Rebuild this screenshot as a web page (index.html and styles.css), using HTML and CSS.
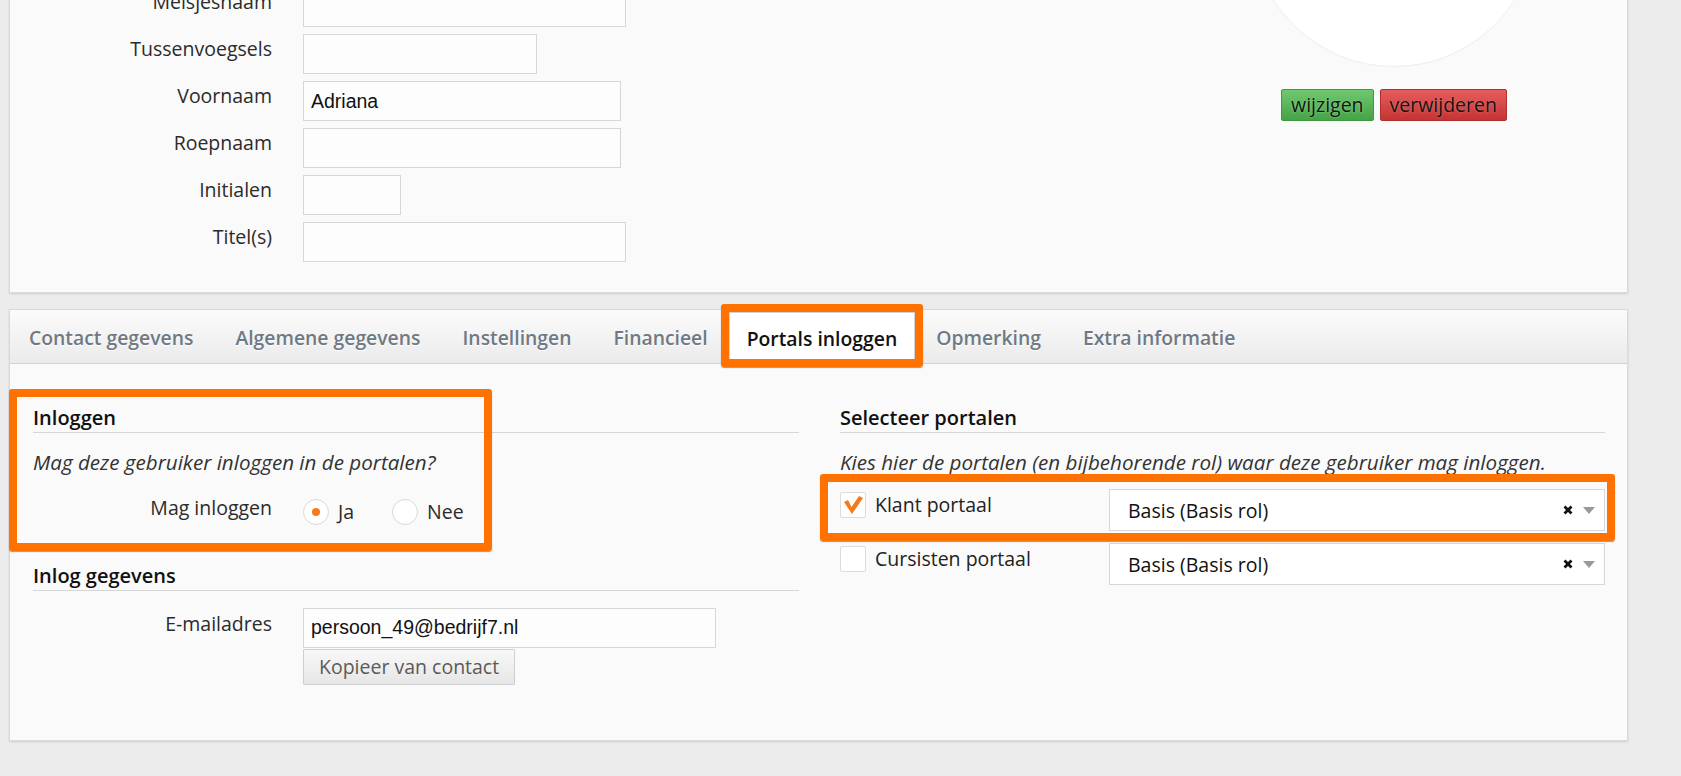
FILE: index.html
```html
<!DOCTYPE html>
<html lang="nl">
<head>
    <meta charset="UTF-8">
    <meta name="viewport" content="width=device-width, initial-scale=1.0">
    <title>Persoon bewerken</title>
    <link rel="stylesheet" href="styles.css">
</head>
<body>
    <div class="page">
        <!-- Persoonsgegevens met foto -->
        <div class="card card-person">
            <div class="person-form">
                <div class="form-row"><label>Aanhef</label><input class="field w-short" type="text" value=""></div>
                <div class="form-row"><label>Geslacht</label><input class="field w-short" type="text" value=""></div>
                <div class="form-row"><label>Relatienummer</label><input class="field w-mid" type="text" value=""></div>
                <div class="form-row"><label>Achternaam</label><input class="field w-long" type="text" value=""></div>
                <div class="form-row"><label>Geboortenaam</label><input class="field w-long" type="text" value=""></div>
                <div class="form-row"><label>Meisjesnaam</label><input class="field w-long" type="text" value=""></div>
                <div class="form-row"><label>Tussenvoegsels</label><input class="field w-mid" type="text" value=""></div>
                <div class="form-row"><label>Voornaam</label><input class="field w-name" type="text" value="Adriana"></div>
                <div class="form-row"><label>Roepnaam</label><input class="field w-name" type="text" value=""></div>
                <div class="form-row"><label>Initialen</label><input class="field w-short" type="text" value=""></div>
                <div class="form-row"><label>Titel(s)</label><input class="field w-long" type="text" value=""></div>
            </div>
            <div class="photo-col">
                <div class="avatar"></div>
                <div class="photo-actions">
                    <button class="btn btn-green">wijzigen</button>
                    <button class="btn btn-red">verwijderen</button>
                </div>
            </div>
        </div>

        <!-- Tabbladen -->
        <div class="card card-tabs">
            <div class="tabs">
                <div class="tab">Contact gegevens</div>
                <div class="tab">Algemene gegevens</div>
                <div class="tab">Instellingen</div>
                <div class="tab">Financieel</div>
                <div class="tab active">Portals inloggen<span class="mark mark-tab"></span></div>
                <div class="tab">Opmerking</div>
                <div class="tab">Extra informatie</div>
            </div>

            <div class="tab-body">
                <div class="col">
                    <div class="section login-section">
                        <h3>Inloggen</h3>
                        <p class="hint">Mag deze gebruiker inloggen in de portalen?</p>
                        <div class="form-row radio-row">
                            <label>Mag inloggen</label>
                            <div class="radio-group">
                                <span class="radio-opt"><span class="radio checked"><span class="dot"></span></span>Ja</span>
                                <span class="radio-opt"><span class="radio"></span>Nee</span>
                            </div>
                        </div>
                        <span class="mark mark-login"></span>
                    </div>

                    <div class="section credentials">
                        <h3>Inlog gegevens</h3>
                        <div class="form-row email-row">
                            <label>E-mailadres</label>
                            <div class="email-field">
                                <input class="field w-mail" type="text" value="persoon_49@bedrijf7.nl">
                                <button class="btn btn-plain">Kopieer van contact</button>
                            </div>
                        </div>
                    </div>
                </div>

                <div class="col">
                    <h3>Selecteer portalen</h3>
                    <p class="hint">Kies hier de portalen (en bijbehorende rol) waar deze gebruiker mag inloggen.</p>
                    <div class="portal-list">
                        <div class="portal-row">
                            <div class="portal-check">
                                <span class="checkbox">
                                    <svg width="20" height="18" viewBox="0 0 20 18"><path d="M1 6 L5 4 L8.5 11 L16 0 L20 2 L9 18 Z" fill="#f47a1d"/></svg>
                                </span>
                                Klant portaal
                            </div>
                            <div class="select">
                                <span class="select-value">Basis (Basis rol)</span>
                                <svg class="clear" width="10" height="10" viewBox="0 0 10 10"><path d="M1.5 1.5 L8.5 8.5 M8.5 1.5 L1.5 8.5" stroke="#111" stroke-width="2.8"/></svg>
                                <svg class="arrow" width="12" height="7" viewBox="0 0 12 7"><path d="M0 0 H12 L6 7 Z" fill="#9a9a9a"/></svg>
                            </div>
                            <span class="mark mark-portal"></span>
                        </div>
                        <div class="portal-row">
                            <div class="portal-check">
                                <span class="checkbox"></span>
                                Cursisten portaal
                            </div>
                            <div class="select">
                                <span class="select-value">Basis (Basis rol)</span>
                                <svg class="clear" width="10" height="10" viewBox="0 0 10 10"><path d="M1.5 1.5 L8.5 8.5 M8.5 1.5 L1.5 8.5" stroke="#111" stroke-width="2.8"/></svg>
                                <svg class="arrow" width="12" height="7" viewBox="0 0 12 7"><path d="M0 0 H12 L6 7 Z" fill="#9a9a9a"/></svg>
                            </div>
                        </div>
                    </div>
                </div>
            </div>
        </div>
    </div>
</body>
</html>
```

FILE: styles.css
```css
body {
    margin: 0;
    background-color: #ececec;
    font-family: "Open Sans", sans-serif;
    font-size: 19.5px;
    line-height: 26.5px;
    color: #2b2b2b;
    overflow: hidden;
}
.page {
    margin-top: -272px;
    padding: 0 0 40px 9px;
    width: 1619px;
}
.card {
    background-color: #fafafa;
    border: 1px solid #d9d9d9;
    box-shadow: 0 1px 2px rgba(0, 0, 0, 0.12);
}

/* bovenste kaart */
.card-person {
    display: flex;
    justify-content: space-between;
    padding: 23px 91px 30px 23px;
}
.form-row {
    display: flex;
    align-items: flex-start;
    gap: 31px;
    margin-bottom: 7px;
}
.person-form .form-row:last-child {
    margin-bottom: 0;
}
.form-row label {
    flex: none;
    width: 239px;
    padding-top: 2px;
    text-align: right;
}
.field {
    box-sizing: border-box;
    height: 40px;
    margin: 0;
    padding: 0 7px;
    border: 1px solid #d7d7d7;
    background-color: #fdfdfd;
    font-family: "Liberation Sans", Arial, sans-serif;
    font-size: 19.5px;
    color: #111;
    outline: none;
}
.w-long { width: 323px; }
.w-name { width: 318px; }
.w-mid { width: 234px; }
.w-short { width: 98px; }
.w-mail { width: 413px; display: block; }

.photo-col {
    display: flex;
    flex-direction: column;
    align-items: center;
    padding-top: 30px;
}
.avatar {
    width: 284px;
    height: 284px;
    border-radius: 50%;
    background-color: #fff;
    box-shadow: 0 1px 1px rgba(170, 205, 235, 0.25);
}
.photo-actions {
    display: flex;
    gap: 6px;
    margin-top: 23px;
}
.btn {
    height: 32px;
    padding: 0 9px;
    border-radius: 2px;
    font-family: "Open Sans", sans-serif;
    font-size: 19.5px;
    line-height: 28px;
    color: #111;
    cursor: pointer;
}
.btn-green {
    background: linear-gradient(#6fc86f, #47a347);
    border: 1px solid #3f9a3f;
    text-shadow: 0 0 2px rgba(160, 235, 160, 0.9);
}
.btn-red {
    background: linear-gradient(#e65d5d, #c53434);
    border: 1px solid #b02f2f;
    text-shadow: 0 0 2px rgba(250, 160, 160, 0.6);
}
.btn-plain {
    display: block;
    height: 36px;
    margin-top: 1px;
    padding: 0 15px;
    border: 1px solid #cfcfcf;
    border-radius: 1px;
    background: linear-gradient(#f8f8f8, #e6e6e6);
    color: #5a5a5a;
    line-height: 32px;
}

/* tabbladen */
.card-tabs {
    margin-top: 16px;
}
.tabs {
    display: flex;
    height: 53px;
    border-bottom: 1px solid #d2d2d2;
    background: linear-gradient(#fbfbfb, #ebebeb);
}
.tab {
    display: flex;
    align-items: center;
    padding: 4px 21px 0;
    font-size: 19.35px;
    font-weight: 600;
    color: #6f7984;
    text-shadow: 0 1px 0 #fff;
    white-space: nowrap;
}
.tab:first-child {
    padding-left: 19px;
}
.tab.active {
    position: relative;
    margin: 2px 0 -1px;
    padding: 2px 17px 0;
    background-color: #fff;
    border: 1px solid #d2d2d2;
    border-bottom: none;
    color: #111;
}

.tab-body {
    display: grid;
    grid-template-columns: 766px 765px;
    gap: 41px;
    padding: 40px 23px 48px;
}
h3 {
    margin: 0;
    padding-bottom: 1px;
    border-bottom: 1px solid #d6d6d6;
    font-size: 20px;
    font-weight: 600;
    line-height: 27px;
    color: #111;
}
.hint {
    margin: 15.5px 0 0;
    font-size: 20.6px;
    font-style: italic;
    color: #333;
}
.section {
    position: relative;
}
.radio-row {
    margin-top: 20px;
    margin-bottom: 0;
}
.radio-row label {
    padding-top: 0;
}
.radio-group {
    display: flex;
    padding-top: 4px;
}
.radio-opt {
    display: flex;
    align-items: center;
    gap: 9px;
    margin-right: 38px;
}
.radio {
    display: flex;
    align-items: center;
    justify-content: center;
    box-sizing: border-box;
    width: 26px;
    height: 26px;
    border: 1px solid #d9d9d9;
    border-radius: 50%;
    background-color: #fff;
}
.radio .dot {
    width: 8px;
    height: 8px;
    border-radius: 50%;
    background-color: #f47a1d;
}
.credentials {
    margin-top: 36px;
}
.email-row {
    margin-top: 17px;
}
.email-row label {
    padding-top: 3px;
}

/* portalen */
.portal-list {
    margin-top: 14px;
}
.portal-row {
    position: relative;
    display: flex;
    height: 42px;
    margin-bottom: 12px;
}
.portal-check {
    display: flex;
    align-items: flex-start;
    gap: 9px;
    flex: none;
    width: 269px;
    padding-top: 3px;
    color: #222;
}
.checkbox {
    display: flex;
    align-items: center;
    justify-content: center;
    box-sizing: border-box;
    width: 26px;
    height: 26px;
    border: 1px solid #dcdcdc;
    border-radius: 2px;
    background-color: #fff;
}
.select {
    display: flex;
    align-items: center;
    flex: 1;
    box-sizing: border-box;
    height: 42px;
    padding: 0 9px 0 18px;
    border: 1px solid #d7d7d7;
    background-color: #fff;
    color: #111;
}
.select-value {
    flex: 1;
    padding-top: 2px;
}
.select .clear {
    margin-right: 10px;
}

/* oranje markeringen */
.mark {
    position: absolute;
    border: 8px solid #ff7200;
    border-radius: 3px;
    box-shadow: 0 1px 1px rgba(0, 0, 0, 0.4);
    pointer-events: none;
}
.mark-tab {
    left: -9px;
    right: -9px;
    top: -9px;
    bottom: -3px;
}
.mark-login {
    left: -24px;
    top: -15px;
    width: 467px;
    bottom: -25px;
}
.mark-portal {
    left: -20px;
    right: -10px;
    top: -15px;
    bottom: -10px;
}
```
